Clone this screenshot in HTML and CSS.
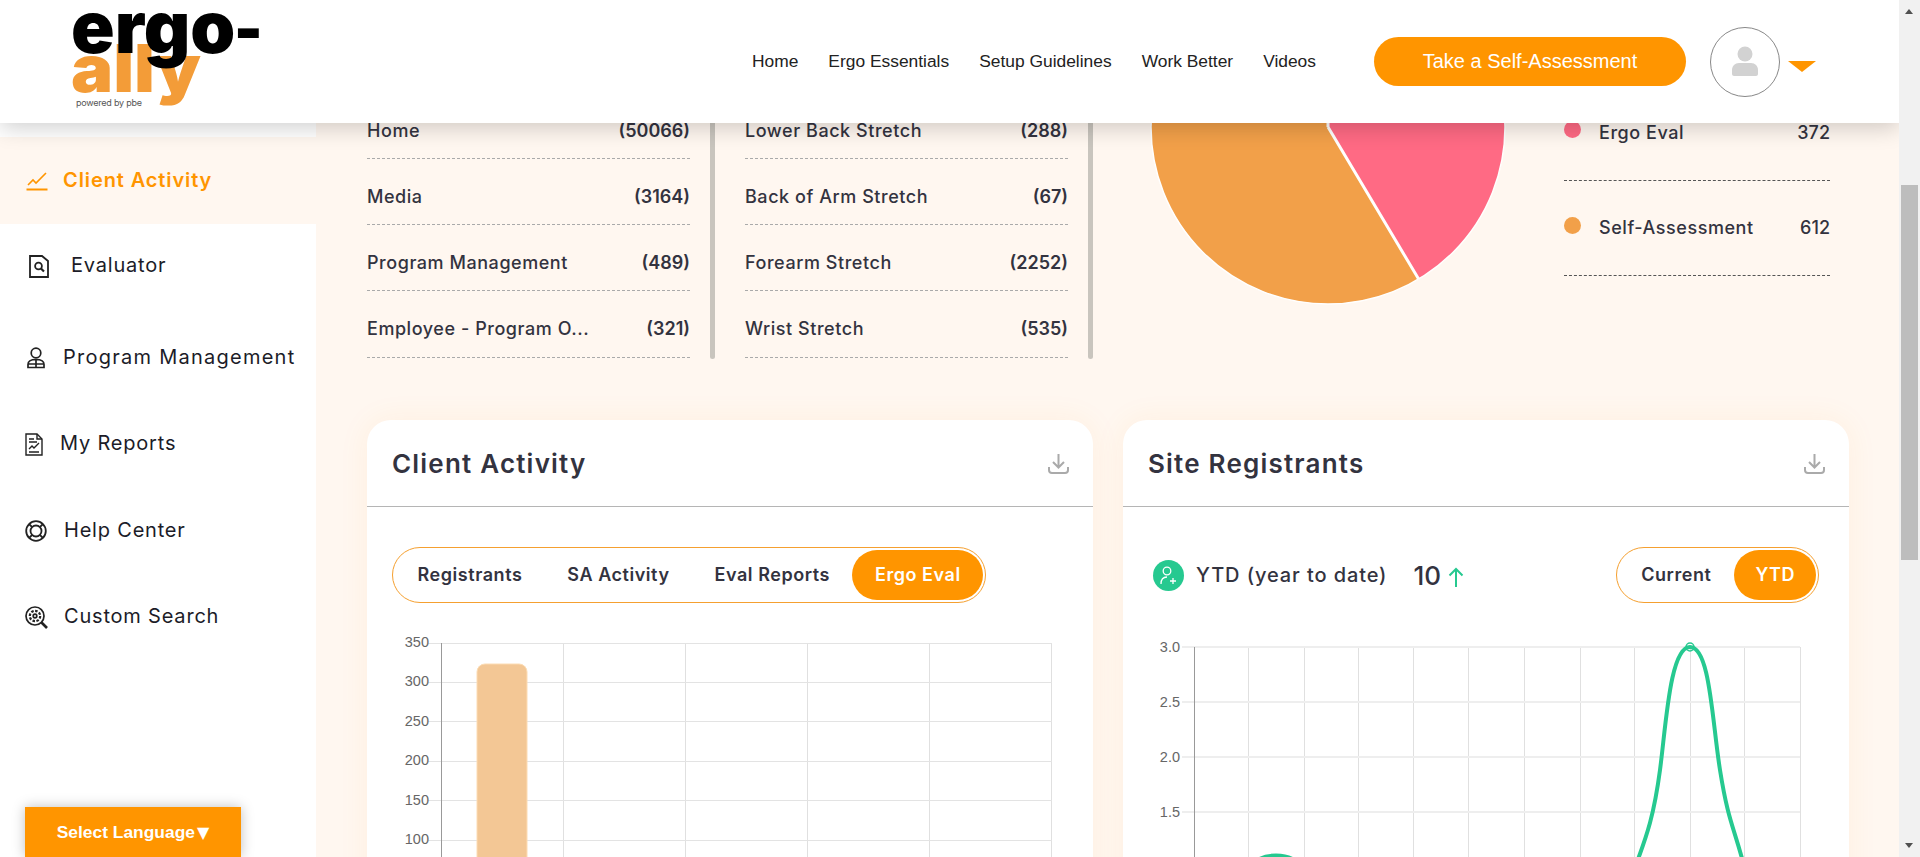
FILE: index.html
```html
<!DOCTYPE html>
<html lang="en">
<head>
    <meta charset="UTF-8">
    <meta name="viewport" content="width=device-width, initial-scale=1.0">
    <title>Ergo-Ally Dashboard</title>
    <link rel="stylesheet" href="styles.css">
</head>
<body>
    <div class="page">
        <div class="viewport">
            <header class="topbar">
                <svg class="logo" width="270" height="123" viewBox="0 0 270 123">
                    <text class="logo-ally" x="71" y="92" textLength="130" lengthAdjust="spacingAndGlyphs">ally</text>
                    <text class="logo-ergo" x="71" y="53">ergo<tspan class="logo-dash" dx="-1">-</tspan></text>
                    <text class="logo-sub" x="76" y="106" textLength="66">powered by pbe</text>
                </svg>
                <nav class="nav">
                    <a>Home</a>
                    <a>Ergo Essentials</a>
                    <a>Setup Guidelines</a>
                    <a>Work Better</a>
                    <a>Videos</a>
                </nav>
                <a class="assess-btn">Take a Self-Assessment</a>
                <div class="avatar">
                    <svg width="30" height="38" viewBox="0 0 30 38">
                        <circle cx="15" cy="11" r="7.5" fill="#d2d2d2"/>
                        <path d="M2 31v-4c0-4 3-7 7-7h12c4 0 7 3 7 7v4c0 1-1 2-2 2H4c-1 0-2-1-2-2z" fill="#d2d2d2"/>
                    </svg>
                </div>
                <span class="caret"></span>
            </header>

            <div class="layout">
                <aside class="sidebar">
                    <a class="side-item active">
                        <svg width="22" height="20" viewBox="0 0 22 20" fill="none" stroke="#ff9500" stroke-width="1.6">
                            <path d="M2 14l5-5 3 3 10-10"/>
                            <path d="M0.5 18.5h21" stroke-width="2"/>
                        </svg>
                        <span>Client Activity</span>
                    </a>
                    <a class="side-item item-eval">
                        <svg width="20" height="23" viewBox="0 0 20 23" fill="none" stroke="#222" stroke-width="1.8">
                            <path d="M1 1h12l6 5v16H1z"/>
                            <circle cx="9.5" cy="11" r="3.4"/>
                            <path d="M12 13.5l3 3" stroke-width="2.2"/>
                        </svg>
                        <span>Evaluator</span>
                    </a>
                    <a class="side-item item-program">
                        <svg width="18" height="22" viewBox="0 0 18 22" fill="none" stroke="#222" stroke-width="1.7">
                            <circle cx="9" cy="6" r="4.8"/>
                            <path d="M1 20.5v-3c0-3 3-5 8-5s8 2 8 5v3zM9 12.5v8M1 17h16"/>
                        </svg>
                        <span>Program Management</span>
                    </a>
                    <a class="side-item item-reports">
                        <svg width="18" height="23" viewBox="0 0 18 23" fill="none" stroke="#222" stroke-width="1.4">
                            <path d="M1 1h11l5 5v16H1z"/>
                            <path d="M12 1v5h5M4 6h5M4 9h8M4 19h10M4 16l3-3 2 2 5-5"/>
                        </svg>
                        <span>My Reports</span>
                    </a>
                    <a class="side-item item-help">
                        <svg width="22" height="22" viewBox="0 0 22 22" fill="none" stroke="#222" stroke-width="1.8">
                            <circle cx="11" cy="11" r="9.8"/>
                            <circle cx="11" cy="11" r="5.5"/>
                            <path d="M4 4l3.2 3.2M18 4l-3.2 3.2M4 18l3.2-3.2M18 18l-3.2-3.2"/>
                        </svg>
                        <span>Help Center</span>
                    </a>
                    <a class="side-item item-search">
                        <svg width="23" height="23" viewBox="0 0 23 23" fill="none" stroke="#222" stroke-width="1.7">
                            <circle cx="10" cy="10" r="9"/>
                            <circle cx="10" cy="10" r="5.2" stroke-dasharray="2.5 1.5" stroke-width="2.2"/>
                            <circle cx="10" cy="10" r="1.8"/>
                            <path d="M16.5 16.5l5.5 5.5" stroke-width="2.6"/>
                        </svg>
                        <span>Custom Search</span>
                    </a>
                </aside>

                <main class="content">
                    <section class="stats">
                        <div class="stat-col">
                            <ul class="stat-list">
                                <li><span>Home</span><b>(50066)</b></li>
                                <li><span>Media</span><b>(3164)</b></li>
                                <li><span>Program Management</span><b>(489)</b></li>
                                <li><span>Employee - Program O...</span><b>(321)</b></li>
                            </ul>
                            <div class="list-thumb"></div>
                        </div>
                        <div class="stat-col">
                            <ul class="stat-list">
                                <li><span>Lower Back Stretch</span><b>(288)</b></li>
                                <li><span>Back of Arm Stretch</span><b>(67)</b></li>
                                <li><span>Forearm Stretch</span><b>(2252)</b></li>
                                <li><span>Wrist Stretch</span><b>(535)</b></li>
                            </ul>
                            <div class="list-thumb"></div>
                        </div>
                        <svg class="pie" width="360" height="216" viewBox="1148 93 360 216">
                            <circle cx="1328" cy="127" r="177" fill="#f2a049"/>
                            <path d="M1328 127V-50A177 177 0 0 1 1418.6 279z" fill="#ff6a84"/>
                            <path d="M1328 127L1418.6 279M1328 127V-50" stroke="#fff" stroke-width="3" fill="none"/>
                            <circle cx="1328" cy="127" r="177" fill="none" stroke="#fff" stroke-width="1.5"/>
                        </svg>
                        <ul class="legend">
                            <li><i class="dot dot-pink"></i><span>Ergo Eval</span><em>372</em></li>
                            <li><i class="dot dot-orange"></i><span>Self-Assessment</span><em>612</em></li>
                        </ul>
                    </section>

                    <section class="cards">
                        <div class="card">
                            <div class="card-head">
                                <h2>Client Activity</h2>
                                <svg width="21" height="21" viewBox="0 0 21 21" fill="none" stroke="#aaa" stroke-width="2">
                                    <path d="M10.5 1v13M5 9l5.5 5.5L16 9"/>
                                    <path d="M1 14v3c0 2 1 3 3 3h13c2 0 3-1 3-3v-3"/>
                                </svg>
                            </div>
                            <div class="card-body">
                                <div class="pills">
                                    <a>Registrants</a>
                                    <a>SA Activity</a>
                                    <a>Eval Reports</a>
                                    <a class="on">Ergo Eval</a>
                                </div>
                                <svg class="chart" width="676" height="227" viewBox="392 630 676 227">
                                    <g class="grid-v">
                                        <path d="M563.5 643v227M685.5 643v227M807.5 643v227M929.5 643v227M1051.5 643v227"/>
                                    </g>
                                    <g class="grid-h">
                                        <path d="M428 643.5h624M428 682.5h624M428 721.5h624M428 761.5h624M428 800.5h624M428 840.5h624"/>
                                    </g>
                                    <path class="axis" d="M441.5 643v227"/>
                                    <path d="M477 870V672a8 8 0 0 1 8-8h34a8 8 0 0 1 8 8v198z" fill="#f3c795" stroke="#fcdcb4"/>
                                    <g class="ticks">
                                        <text x="429" y="647">350</text>
                                        <text x="429" y="686">300</text>
                                        <text x="429" y="726">250</text>
                                        <text x="429" y="765">200</text>
                                        <text x="429" y="805">150</text>
                                        <text x="429" y="844">100</text>
                                    </g>
                                </svg>
                            </div>
                        </div>

                        <div class="card">
                            <div class="card-head">
                                <h2>Site Registrants</h2>
                                <svg width="21" height="21" viewBox="0 0 21 21" fill="none" stroke="#aaa" stroke-width="2">
                                    <path d="M10.5 1v13M5 9l5.5 5.5L16 9"/>
                                    <path d="M1 14v3c0 2 1 3 3 3h13c2 0 3-1 3-3v-3"/>
                                </svg>
                            </div>
                            <div class="card-body">
                                <div class="ytd-row">
                                    <span class="ytd-icon">
                                        <svg width="17" height="19" viewBox="0 0 17 19" fill="none" stroke="#fff" stroke-width="1.3">
                                            <circle cx="7" cy="5" r="3.8"/>
                                            <path d="M1 18c0-4 2-7 6-7M10 15h6M13 12v6"/>
                                        </svg>
                                    </span>
                                    <span class="ytd-label">YTD (year to date)</span>
                                    <span class="ytd-num">10</span>
                                    <svg class="ytd-arrow" width="16" height="20" viewBox="0 0 16 20" fill="none" stroke="#26c990" stroke-width="2">
                                        <path d="M8 20V2M1.5 8.5L8 2l6.5 6.5"/>
                                    </svg>
                                    <div class="pills pills-small">
                                        <a>Current</a>
                                        <a class="on">YTD</a>
                                    </div>
                                </div>
                                <svg class="chart" width="676" height="227" viewBox="1148 630 676 227">
                                    <g class="grid-v">
                                        <path d="M1248.5 647v210M1304.5 647v210M1358.5 647v210M1413.5 647v210M1468.5 647v210M1524.5 647v210M1580.5 647v210M1634.5 647v210M1690.5 647v210M1744.5 647v210M1800.5 647v210"/>
                                    </g>
                                    <g class="grid-h thick">
                                        <path d="M1182 647h618M1182 702h618M1182 757h618M1182 812h618"/>
                                    </g>
                                    <path class="axis" d="M1194.5 647v210"/>
                                    <path class="line" d="M1258 860C1264 856 1270 855.5 1276 855.5S1288 856 1294 860M1637 862C1647 835 1654 815 1660 770S1670 647 1690 647S1712 720 1720 770S1733 825 1743 862"/>
                                    <circle class="point" cx="1690" cy="647" r="4"/>
                                    <g class="ticks">
                                        <text x="1180" y="652">3.0</text>
                                        <text x="1180" y="707">2.5</text>
                                        <text x="1180" y="762">2.0</text>
                                        <text x="1180" y="817">1.5</text>
                                    </g>
                                </svg>
                            </div>
                        </div>
                    </section>
                </main>
            </div>

            <a class="lang-btn">Select Language<span class="lang-arrow">&#9660;</span></a>
        </div>

        <div class="scrollbar">
            <span class="arrow-up"></span>
            <span class="scroll-thumb"></span>
            <span class="arrow-down"></span>
        </div>
    </div>
</body>
</html>
```

FILE: styles.css
```css
* {
    box-sizing: border-box;
}
html, body {
    height: 100%;
}
body {
    margin: 0;
    overflow: hidden;
    font-family: Inter, "Open Sans", sans-serif;
    color: #33333f;
}
ul {
    list-style: none;
    margin: 0;
    padding: 0;
}

.page {
    display: flex;
    height: 100vh;
}
.viewport {
    position: relative;
    flex: 1;
    min-width: 0;
    overflow: hidden;
}

/* top bar sits over the scrolled page */
.topbar {
    position: absolute;
    top: 0;
    left: 0;
    right: 0;
    z-index: 5;
    display: flex;
    align-items: center;
    height: 123px;
    padding-right: 83px;
    background: #fff;
    box-shadow: 0 4px 22px rgba(0, 0, 0, 0.2);
}
.logo {
    flex: none;
}
.logo-ergo {
    font: 900 72px Inter, sans-serif;
    fill: #000;
}
.logo-dash {
    font: bold 68px "DejaVu Sans", sans-serif;
}
.logo-ally {
    font: 900 66px Inter, sans-serif;
    fill: #f39c38;
}
.logo-sub {
    font: 400 9px Inter, sans-serif;
    fill: #555;
}
.nav {
    display: flex;
    gap: 30px;
    margin-left: auto;
    font: 17.4px "Liberation Sans", Arial, sans-serif;
    color: #222;
}
.assess-btn {
    display: flex;
    align-items: center;
    justify-content: center;
    width: 312px;
    height: 49px;
    margin-left: 58px;
    border-radius: 25px;
    background: #ff9500;
    color: #fff;
    font: 20px "Liberation Sans", Arial, sans-serif;
}
.avatar {
    display: flex;
    align-items: center;
    justify-content: center;
    width: 70px;
    height: 70px;
    margin-left: 24px;
    border: 1px solid #888;
    border-radius: 50%;
}
.caret {
    width: 0;
    height: 0;
    margin-left: 8px;
    margin-top: 10px;
    border-left: 14px solid transparent;
    border-right: 14px solid transparent;
    border-top: 11px solid #ff9500;
}

.layout {
    display: flex;
    min-height: 100%;
}

/* sidebar */
.sidebar {
    flex: none;
    width: 316px;
    padding-top: 137px;
    background: #fff;
}
.side-item {
    display: flex;
    align-items: center;
    height: 86.5px;
    padding-left: 26px;
    font-size: 20px;
    letter-spacing: 0.8px;
    color: #1c1c28;
}
.side-item span {
    margin-bottom: 2px;
}
.side-item.active {
    height: 87px;
    background: #fff7f0;
    color: #ff9500;
    font-weight: 600;
    letter-spacing: 0.9px;
}
.side-item.active span {
    margin-left: 15px;
}
.item-eval {
    padding-left: 29px;
    margin-bottom: 5px;
    margin-top: -1px;
}
.item-eval span {
    margin-left: 22px;
}
.item-program {
    padding-left: 27px;
    letter-spacing: 1.25px;
}
.item-program span {
    margin-left: 18px;
}
.item-reports {
    padding-left: 25px;
}
.item-reports span {
    margin-left: 17px;
}
.item-help {
    padding-left: 25px;
}
.item-help span {
    margin-left: 17px;
}
.item-search {
    padding-left: 25px;
}
.item-search span {
    margin-left: 16px;
}

/* main */
.content {
    flex: 1;
    min-width: 0;
    padding: 93px 50px 0 51px;
    background: #fff7f0;
}
.stats {
    display: flex;
    height: 266px;
    margin-bottom: 61px;
}
.stat-col {
    display: flex;
    gap: 20px;
    margin-right: 30px;
}
.stat-col + .stat-col {
    margin-right: 0;
}
.stat-list {
    width: 323px;
}
.stat-list li {
    display: flex;
    align-items: center;
    justify-content: space-between;
    height: 66px;
    padding-top: 10px;
    border-bottom: 1px dashed #aaa;
    font-size: 18px;
    font-weight: 500;
    letter-spacing: 0.55px;
}
.stat-list li:last-child {
    height: 67px;
    padding-top: 9px;
}
.stat-list b {
    font-weight: 600;
    letter-spacing: 0;
}
.list-thumb {
    width: 5px;
    background: #c9c5be;
    border-radius: 0 0 3px 3px;
}
.pie {
    flex: none;
    margin-left: 55px;
}
.legend {
    width: 266px;
    margin-left: 56px;
    margin-top: -8px;
    font-size: 18px;
    font-weight: 500;
    letter-spacing: 0.55px;
}
.legend li {
    display: flex;
    align-items: center;
    height: 95.5px;
    border-bottom: 1px dashed #555;
}
.legend span {
    margin-left: 18px;
}
.legend em {
    margin-left: auto;
    font-style: normal;
    letter-spacing: 0;
}
.dot {
    width: 17px;
    height: 17px;
    margin-top: -5px;
    border-radius: 50%;
}
.dot-pink {
    background: #ff6a84;
}
.dot-orange {
    background: #f2a049;
}

/* cards */
.cards {
    display: grid;
    grid-template-columns: minmax(0, 1fr) minmax(0, 1fr);
    gap: 30px;
}
.card {
    height: 600px;
    border-radius: 24px;
    background: #fff;
    box-shadow: 0 0 30px rgba(255, 150, 40, 0.08);
}
.card-head {
    display: flex;
    align-items: center;
    justify-content: space-between;
    height: 87px;
    padding: 0 24px 0 25px;
    border-bottom: 1px solid #b5b5b5;
}
.card-head h2 {
    margin: 0;
    font-size: 26px;
    font-weight: 600;
    letter-spacing: 1.2px;
}
.card-body {
    padding: 40px 25px 0;
}
.pills {
    display: inline-flex;
    padding: 2px;
    border: 1px solid #f5a030;
    border-radius: 29px;
    font-size: 18px;
    font-weight: 600;
    letter-spacing: 0.55px;
}
.pills a {
    display: flex;
    align-items: center;
    height: 50px;
    padding: 0 22.5px 2px;
    border-radius: 25px;
}
.pills a.on {
    background: #ff9500;
    color: #fff;
}
.pills-small {
    margin-left: auto;
}
.pills-small a {
    padding: 0 23px 2px 22px;
}
.pills-small a.on {
    padding: 0 21px 2px;
}
.ytd-row {
    display: flex;
    align-items: center;
    padding: 0 5px;
}
.ytd-icon {
    display: flex;
    align-items: center;
    justify-content: center;
    width: 31px;
    height: 31px;
    border-radius: 50%;
    background: #26c990;
}
.ytd-label {
    margin-left: 12px;
    font-size: 20px;
    font-weight: 500;
    letter-spacing: 0.9px;
}
.ytd-num {
    margin-left: 26px;
    font-size: 26px;
    font-weight: 500;
}
.ytd-arrow {
    margin-left: 7px;
    margin-top: 3px;
}
.chart {
    display: block;
    margin-top: 27px;
}
.grid-v path {
    stroke: #e0e0e0;
    stroke-width: 1;
    fill: none;
}
.grid-h path {
    stroke: #e3e3e3;
    stroke-width: 1;
    fill: none;
}
.grid-h.thick path {
    stroke: #eee;
    stroke-width: 2;
}
.axis {
    stroke: #999;
    stroke-width: 1;
    fill: none;
}
.ticks text {
    font: 14.5px "Liberation Sans", Arial, sans-serif;
    fill: #666;
    text-anchor: end;
}
.line {
    fill: none;
    stroke: #26c990;
    stroke-width: 4;
}
.point {
    fill: none;
    stroke: #26c990;
    stroke-width: 1.5;
}

/* language picker stays pinned at the bottom */
.lang-btn {
    position: absolute;
    left: 25px;
    bottom: 0;
    display: flex;
    align-items: center;
    justify-content: center;
    width: 216px;
    height: 50px;
    background: #ff9500;
    color: #fff;
    font: bold 17.4px "Liberation Sans", Arial, sans-serif;
    box-shadow: 0 0 12px rgba(0, 0, 0, 0.25);
}
.lang-arrow {
    margin-left: 2px;
    font: 16px "DejaVu Sans", sans-serif;
}

/* page scrollbar */
.scrollbar {
    position: relative;
    flex: none;
    width: 21px;
    background: #f1f1f1;
}
.scroll-thumb {
    position: absolute;
    top: 185px;
    left: 2px;
    width: 17px;
    height: 375px;
    background: #bdbdbd;
}
.arrow-up,
.arrow-down {
    position: absolute;
    left: 6px;
    width: 0;
    height: 0;
    border-left: 4.5px solid transparent;
    border-right: 4.5px solid transparent;
}
.arrow-up {
    top: 9px;
    border-bottom: 5px solid #505050;
}
.arrow-down {
    bottom: 9px;
    border-top: 5px solid #505050;
}
```
